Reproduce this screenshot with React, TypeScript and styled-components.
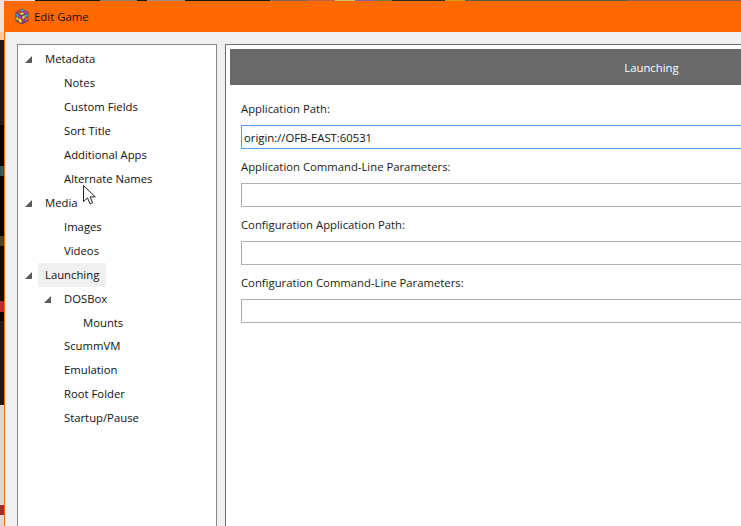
import styled, { createGlobalStyle } from "styled-components";

const GlobalStyle = createGlobalStyle`
  html, body {
    margin: 0;
    padding: 0;
    background: #111;
  }
  #root {
    width: 741px;
    height: 526px;
    overflow: hidden;
  }
`;

const Desktop = styled.div`
  position: relative;
  width: 741px;
  height: 526px;
  overflow: hidden;
  display: flex;
  flex-direction: column;
  font-family: "Open Sans", "Noto Sans", sans-serif;
  font-size: 11.3px;
  color: #111;
`;

const TopStrip = styled.div`
  height: 1px;
  flex: none;
  background: linear-gradient(
    90deg,
    #e8e0d8 0 35px,
    #161616 35px 100px,
    #8a8078 100px 137px,
    #161616 137px 147px,
    #9a9088 147px 185px,
    #161616 185px 270px,
    #7a6a60 270px 307px,
    #c06050 307px 335px,
    #d0c070 335px 355px,
    #8a60a0 355px 375px,
    #708040 375px 392px,
    #2a2a24 392px 445px,
    #d0a010 445px 465px,
    #5a6048 465px 628px,
    #906050 628px 741px
  );
`;

const Screen = styled.div`
  flex: 1;
  display: flex;
  min-height: 0;
`;

const BackdropEdge = styled.div`
  width: 4px;
  flex: none;
  background: linear-gradient(
    180deg,
    #f2e2d4 0 31px,
    #f6c9a0 31px 39px,
    #1c1c1c 39px 124px,
    #050505 124px 165px,
    #2c5a60 165px 175px,
    #050505 175px 235px,
    #4a4428 235px 245px,
    #100c08 245px 300px,
    #b03038 300px 311px,
    #050505 311px 320px,
    #1c1c1c 320px 404px,
    #d8d8d8 404px 504px,
    #a03030 504px 514px,
    #d8d8d8 514px
  );
`;

const Window = styled.div`
  flex: none;
  width: 900px;
  display: flex;
  flex-direction: column;
  background: #f0f0f0;
  border-left: 1px solid #ff6a00;
`;

const TitleBar = styled.div`
  height: 31px;
  flex: none;
  display: flex;
  align-items: center;
  gap: 4px;
  padding-left: 9px;
  background: #ff6a00;
  color: #1a0f05;
  font-size: 11.4px;
`;

const Body = styled.div`
  flex: 1;
  min-height: 0;
  display: flex;
  gap: 8px;
  padding: 12px 0 0 12px;
`;

const Tree = styled.ul`
  width: 200px;
  flex: none;
  box-sizing: border-box;
  margin: 0;
  padding: 2px 0 0;
  list-style: none;
  background: #fff;
  border: 1px solid #828790;
  border-bottom: none;
`;

const TreeRow = styled.li<{ $level: number; $short?: boolean }>`
  height: ${(p) => (p.$short ? 23 : 24)}px;
  display: flex;
  align-items: center;
  padding-left: ${(p) => 7 + p.$level * 19}px;
`;

const Arrow = styled.span<{ $visible: boolean }>`
  width: 0;
  height: 0;
  flex: none;
  margin-right: 13px;
  border-style: solid;
  border-width: 0 0 7px 7px;
  border-color: transparent transparent ${(p) => (p.$visible ? "#595959" : "transparent")} transparent;
`;

const TreeLabel = styled.span<{ $selected: boolean }>`
  height: 24px;
  line-height: 24px;
  margin-left: -7px;
  padding: 0 7px;
  background: ${(p) => (p.$selected ? "#f0f0f0" : "transparent")};
  white-space: nowrap;
`;

const Panel = styled.section`
  width: 853px;
  flex: none;
  box-sizing: border-box;
  padding: 4px;
  background: #fff;
  border: 1px solid #6d6d6d;
  border-bottom: none;
`;

const PanelHeader = styled.h2`
  height: 36px;
  margin: 0;
  display: flex;
  align-items: center;
  justify-content: center;
  background: #696969;
  color: #fff;
  font-size: 11.3px;
  font-weight: 400;
`;

const Fields = styled.div`
  padding: 14px 11px 0;
`;

const Field = styled.div`
  height: 58px;
  display: flex;
  flex-direction: column;
`;

const FieldLabel = styled.label`
  height: 26px;
  flex: none;
  box-sizing: border-box;
  padding-bottom: 8px;
  display: flex;
  align-items: center;
  color: #1a1a1a;
`;

const TextBox = styled.input<{ $focused?: boolean }>`
  height: 24px;
  flex: none;
  box-sizing: border-box;
  padding: 0 2px;
  outline: none;
  border: 1px solid ${(p) => (p.$focused ? "#569de5" : "#abadb3")};
  background: #fff;
  color: #111;
  font: inherit;
`;

const Cursor = styled.svg`
  position: absolute;
  left: 83px;
  top: 185px;
`;

type Node = { label: string; level: number; expander?: boolean; selected?: boolean; short?: boolean };

const nodes: Node[] = [
  { label: "Metadata", level: 0, expander: true },
  { label: "Notes", level: 1 },
  { label: "Custom Fields", level: 1 },
  { label: "Sort Title", level: 1 },
  { label: "Additional Apps", level: 1 },
  { label: "Alternate Names", level: 1 },
  { label: "Media", level: 0, expander: true },
  { label: "Images", level: 1 },
  { label: "Videos", level: 1 },
  { label: "Launching", level: 0, expander: true, selected: true },
  { label: "DOSBox", level: 1, expander: true },
  { label: "Mounts", level: 2, short: true },
  { label: "ScummVM", level: 1 },
  { label: "Emulation", level: 1 },
  { label: "Root Folder", level: 1 },
  { label: "Startup/Pause", level: 1 },
];

const fields = [
  { label: "Application Path:", value: "origin://OFB-EAST:60531", focused: true },
  { label: "Application Command-Line Parameters:", value: "" },
  { label: "Configuration Application Path:", value: "" },
  { label: "Configuration Command-Line Parameters:", value: "" },
];

function CubeIcon() {
  return (
    <svg width="16" height="17" viewBox="0 0 16 17">
      <path d="M8 .5l6.5 3.5v9L8 16.5 1.500 13V4z" fill="#6a4060" />
      <path d="M2.500 4.200L5.500 2.600l2 1.100-3 1.700z" fill="#e04a2a" />
      <path d="M6.500 2.100L8 1.300l2.500 1.300L8.500 3.700z" fill="#35b4ea" />
      <path d="M9 4.200l2.400-1.200 2.200 1.200-2.400 1.300z" fill="#b040c0" />
      <path d="M5.300 5.800l2.700-1.500 2.300 1.300-2.500 1.500z" fill="#f0e020" />
      <path d="M2.300 5.300l2.200 1.200v2.800L2.300 8z" fill="#2aa8ea" />
      <path d="M5 7l2.600 1.400v2.600L5 9.600z" fill="#b030c8" />
      <path d="M2.300 8.800l2.200 1.300v2.700l-2.200-1.200z" fill="#e8d820" />
      <path d="M5 10.400l2.600 1.400v3.200L5 13.600z" fill="#f0e820" />
      <path d="M8.400 8.400l2.300-1.300V10l-2.300 1.200z" fill="#f0e020" />
      <path d="M11.200 6.800l2.500-1.400V8l-2.500 1.400z" fill="#2fb0e8" />
      <path d="M8.400 12l2.300-1.200v2.700l-2.300 1.400z" fill="#9a30c0" />
      <path d="M11.200 10.300l2.500-1.400v2.900l-2.500 1.400z" fill="#e86030" />
    </svg>
  );
}

export default function App() {
  return (
    <>
      <GlobalStyle />
      <Desktop>
        <TopStrip />
        <Screen>
          <BackdropEdge />
          <Window>
            <TitleBar>
              <CubeIcon />
              <span>Edit Game</span>
            </TitleBar>
            <Body>
              <Tree>
                {nodes.map((node) => (
                  <TreeRow key={node.label} $level={node.level} $short={node.short}>
                    <Arrow $visible={!!node.expander} />
                    <TreeLabel $selected={!!node.selected}>{node.label}</TreeLabel>
                  </TreeRow>
                ))}
              </Tree>
              <Panel>
                <PanelHeader>Launching</PanelHeader>
                <Fields>
                  {fields.map((field) => (
                    <Field key={field.label}>
                      <FieldLabel>{field.label}</FieldLabel>
                      <TextBox readOnly value={field.value} $focused={field.focused} />
                    </Field>
                  ))}
                </Fields>
              </Panel>
            </Body>
          </Window>
        </Screen>
        <Cursor width="13" height="20" viewBox="0 0 13 20">
          <path
            d="M.5.5v16l4-3.600 2.600 6 2.600-1.100-2.600-5.900h5.200z"
            fill="#fff"
            stroke="#222"
            strokeWidth="1"
          />
        </Cursor>
      </Desktop>
    </>
  );
}
